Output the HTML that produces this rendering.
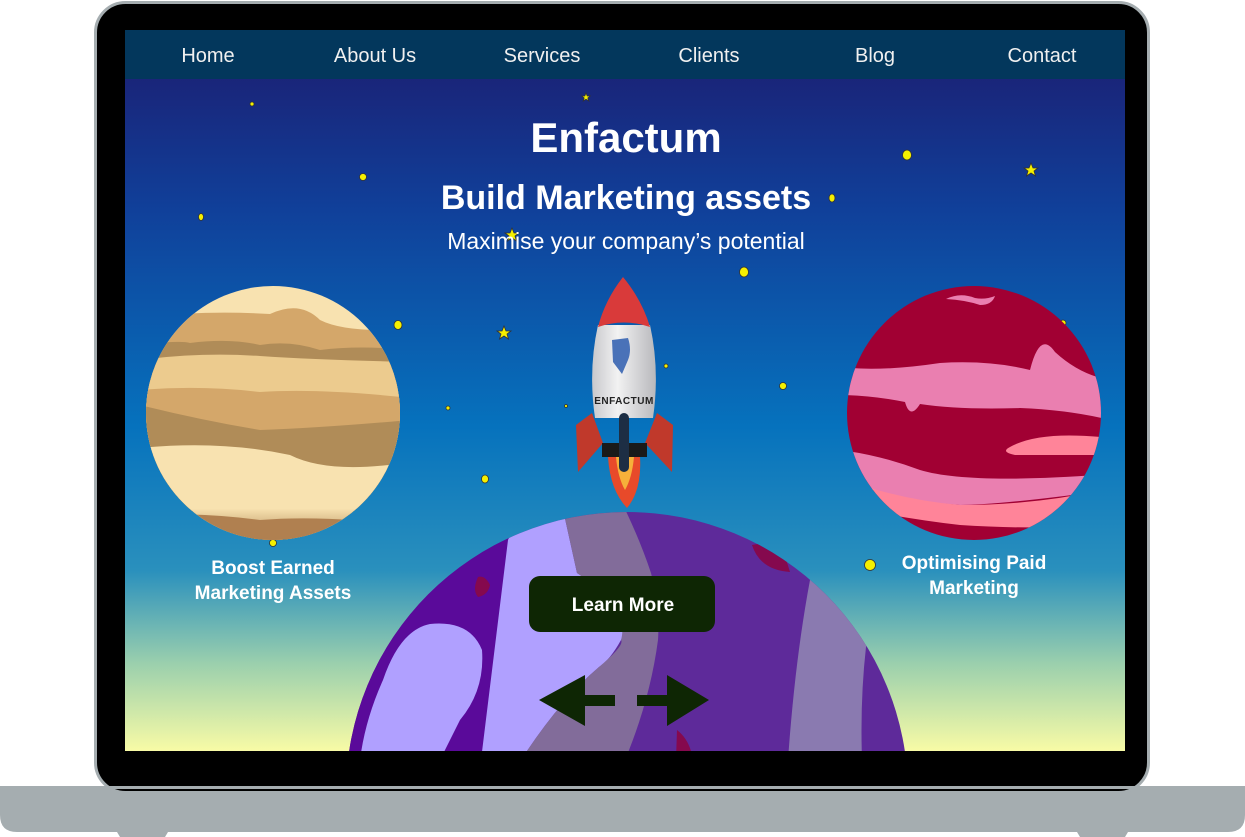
<!DOCTYPE html>
<html><head><meta charset="utf-8"><style>
html,body{margin:0;padding:0;width:1245px;height:837px;background:#fff;overflow:hidden;font-family:"Liberation Sans",sans-serif}
</style></head><body>
<svg width="1245" height="837" viewBox="0 0 1245 837" xmlns="http://www.w3.org/2000/svg" style="position:absolute;left:0;top:0">
<defs>
<linearGradient id="sky" x1="0" y1="0" x2="0" y2="1">
<stop offset="0" stop-color="#1d1b6e"/>
<stop offset="0.25" stop-color="#10409a"/>
<stop offset="0.55" stop-color="#0672bd"/>
<stop offset="0.75" stop-color="#2a90bd"/>
<stop offset="0.88" stop-color="#9cd0ad"/>
<stop offset="1" stop-color="#f8fba6"/>
</linearGradient>
<clipPath id="scr"><rect x="125" y="30" width="1000" height="721"/></clipPath>
<clipPath id="big"><circle cx="627" cy="793" r="281"/></clipPath>
<clipPath id="jup"><circle cx="273" cy="413" r="127"/></clipPath>
<clipPath id="pnk"><circle cx="974" cy="413" r="127"/></clipPath>
<linearGradient id="body" x1="0" y1="0" x2="1" y2="0">
<stop offset="0" stop-color="#c8c8cc"/><stop offset="0.4" stop-color="#f2f2f2"/><stop offset="1" stop-color="#b8b8bc"/>
</linearGradient>
<linearGradient id="jb" x1="0" y1="0" x2="0" y2="1">
<stop offset="0" stop-color="#f8e2b0"/><stop offset="0.55" stop-color="#f8e2b0"/><stop offset="0.8" stop-color="#b89260"/><stop offset="1" stop-color="#b08050"/>
</linearGradient>
</defs>
<path d="M0 787 H1245 V815 Q1245 832 1228 832 H1128 L1125 837 H1080 L1077 832 H168 L165 837 H120 L117 832 H17 Q0 832 0 815 Z" fill="#a5adb0"/>
<rect x="95.5" y="2.5" width="1053" height="790" rx="30" fill="#000" stroke="#a5adb0" stroke-width="3"/>
<rect x="0" y="786" width="1245" height="3" fill="#a5adb0"/>
<g clip-path="url(#scr)">
<rect x="125" y="30" width="1000" height="721" fill="url(#sky)"/>
<rect x="125" y="30" width="1000" height="49" fill="#03375c"/>
<g font-size="20" fill="#f0f0f0" text-anchor="middle">
<text x="208" y="62">Home</text><text x="375" y="62">About Us</text><text x="542" y="62">Services</text>
<text x="709" y="62">Clients</text><text x="875" y="62">Blog</text><text x="1042" y="62">Contact</text>
</g>
<g fill="#f5f000" stroke="#333" stroke-width="0.8">
<ellipse cx="252" cy="104" rx="2" ry="2"/><ellipse cx="363" cy="177" rx="3.5" ry="3.5"/><ellipse cx="907" cy="155" rx="4.5" ry="5"/>
<ellipse cx="201" cy="217" rx="2.5" ry="3.5"/><ellipse cx="832" cy="198" rx="3" ry="4"/><ellipse cx="744" cy="272" rx="4.5" ry="5"/>
<ellipse cx="398" cy="325" rx="4" ry="4.5"/><ellipse cx="1063" cy="323" rx="3" ry="3"/><ellipse cx="666" cy="366" rx="2" ry="2"/>
<ellipse cx="783" cy="386" rx="3.5" ry="3.5"/><ellipse cx="448" cy="408" rx="2" ry="2"/><ellipse cx="566" cy="406" rx="1.5" ry="1.5"/>
<ellipse cx="485" cy="479" rx="3.5" ry="4"/><ellipse cx="273" cy="543" rx="3.5" ry="3.5"/><ellipse cx="870" cy="565" rx="5.5" ry="5.5"/>
<path d="M586 93l1.2 3h3l-2.4 2 1 3-2.8-1.8-2.8 1.8 1-3-2.4-2h3z"/>
<path d="M1031 163l2 5h5l-4 3 1.5 5-4.5-3-4.5 3 1.5-5-4-3h5z"/>
<path d="M512 228l2 5h5l-4 3 1.5 5-4.5-3-4.5 3 1.5-5-4-3h5z"/>
<path d="M504 326l2 5h5l-4 3 1.5 5-4.5-3-4.5 3 1.5-5-4-3h5z"/>
</g>
<g fill="#fff" text-anchor="middle" font-weight="bold">
<text x="626" y="152" font-size="42">Enfactum</text>
<text x="626" y="209" font-size="34">Build Marketing assets</text>
</g>
<text x="626" y="249" font-size="23" fill="#fff" text-anchor="middle">Maximise your company’s potential</text>
<g clip-path="url(#jup)">
<rect x="140" y="280" width="270" height="270" fill="#f8e2b0"/>
<path d="M140 318 Q200 310 270 314 Q300 300 320 320 Q340 330 380 330 L410 340 V560 H140Z" fill="#d4a76a"/>
<path d="M140 345 Q180 340 190 343 Q230 338 260 345 Q290 340 320 350 Q360 345 410 350 V560 H140Z" fill="#b08c58"/>
<path d="M140 360 Q200 352 260 356 Q320 360 410 362 V560 H140Z" fill="#eccb8e"/>
<path d="M140 390 Q200 385 260 392 Q320 388 410 398 V560 H140Z" fill="#d4a76a"/>
<path d="M140 405 Q200 420 260 430 Q320 428 410 420 V560 H140Z" fill="#b08c58"/>
<path d="M140 448 Q220 440 290 455 Q330 475 410 462 V560 H140Z" fill="url(#jb)"/>
<path d="M140 515 Q200 512 260 520 Q320 515 410 525 V560 H140Z" fill="#b08050"/>
</g>
<g clip-path="url(#pnk)">
<rect x="840" y="280" width="270" height="270" fill="#a10033"/>
<path d="M840 367 Q880 372 940 363 Q990 360 1030 370 Q1040 330 1055 352 Q1080 375 1110 380 V420 Q1070 410 1020 408 Q960 410 920 404 Q910 420 905 402 Q870 395 840 395Z" fill="#ea7fb0"/>
<path d="M1010 447 Q1040 430 1110 438 V455 L1015 455 Q1000 452 1010 447Z" fill="#ff8499"/>
<path d="M840 450 Q880 455 920 470 Q970 485 1110 474 V490 Q1000 505 960 505 Q890 500 840 478Z" fill="#ea7fb0"/>
<path d="M840 478 Q900 500 960 505 Q1040 505 1110 488 V525 Q1040 530 960 525 Q900 518 840 505Z" fill="#ff8499"/>
<path d="M946 299 Q960 292 975 298 Q985 300 995 296 Q992 305 980 305 Q965 300 946 299Z" fill="#ea7fb0"/>
</g>
<g clip-path="url(#big)">
<rect x="340" y="505" width="580" height="260" fill="#5e2a9a"/>
<rect x="340" y="505" width="170" height="260" fill="#5a0a9a"/>
<path d="M508 540 Q520 510 562 505 L577 573 Q640 610 621 640 Q610 660 599 667 Q560 700 521 760 H481 Z" fill="#b0a0ff"/>
<path d="M562 505 H623 Q640 540 651 573 Q660 610 658 640 Q650 700 625 760 H521 Q560 700 599 667 Q625 645 621 640 Q630 610 577 573 Z" fill="#826c9a"/>
<path d="M810 540 L810 580 Q795 660 788 760 H862 Q860 700 866 647 L880 600 L870 540Z" fill="#8a7ab0"/>
<path d="M383 680 Q400 630 430 624 Q470 620 482 650 Q485 690 460 720 L440 760 H360 Q365 720 383 680Z" fill="#b0a0ff"/>
<path d="M478 577 Q485 575 490 585 Q488 595 478 597 Q472 590 478 577Z" fill="#85094e"/>
<path d="M752 545 Q760 570 790 572 L780 540Z" fill="#85094e"/>
<path d="M677 730 Q690 740 693 760 H676Z" fill="#85094e"/>
</g>
<rect x="529" y="576" width="186" height="56" rx="11" fill="#0e2604"/>
<text x="623" y="611" font-size="19" font-weight="bold" fill="#fff" text-anchor="middle">Learn More</text>
<path d="M539 700 L585 675 V695 H615 V706 H585 V726Z" fill="#0e2604"/>
<path d="M709 700 L667 675 V695 H637 V706 H667 V726Z" fill="#0e2604"/>
<g font-weight="bold" font-size="19" fill="#fff" text-anchor="middle">
<text x="273" y="574">Boost Earned</text><text x="273" y="599">Marketing Assets</text>
<text x="974" y="569">Optimising Paid</text><text x="974" y="594">Marketing</text>
</g>
<path d="M592 413 L576 425 L578 472 L603 443Z" fill="#c0392b"/>
<path d="M657 413 L673 425 L672 472 L645 443Z" fill="#c0392b"/>
<path d="M608 457 Q610 490 627 508 Q642 490 640 457Z" fill="#e84a2a"/>
<path d="M616 457 Q618 478 625 490 Q632 478 634 457Z" fill="#f6b03a"/>
<rect x="602" y="443" width="45" height="14" fill="#1a1a1a"/>
<path d="M598 325 Q588 370 595 418 H653 Q660 370 650 325Z" fill="url(#body)"/>
<path d="M623 277 Q605 300 598 327 Q624 318 650 327 Q642 300 623 277Z" fill="#d93a3a"/>
<path d="M612 340 L628 338 Q632 350 628 360 L622 374 L613 362Z" fill="#4a72b8"/>
<text x="624" y="404" font-size="10" font-weight="bold" fill="#222" text-anchor="middle" letter-spacing="0.5">ENFACTUM</text>
<rect x="619" y="413" width="10" height="59" rx="5" fill="#1d2e44"/>
</g>
</svg>
</body></html>
